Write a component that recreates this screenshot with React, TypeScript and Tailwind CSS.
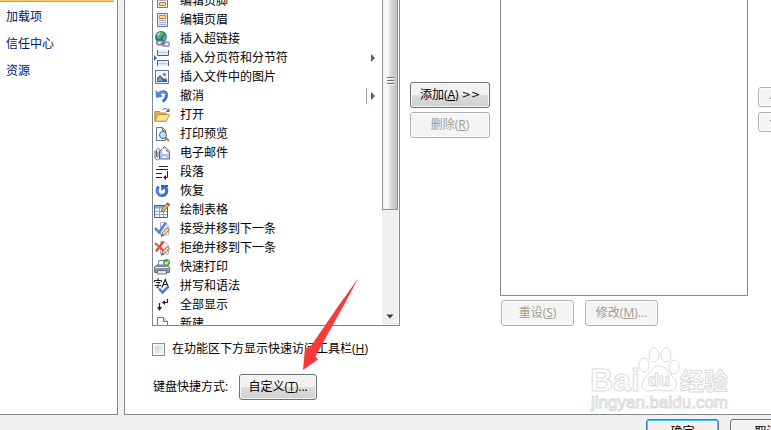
import type { ReactNode } from "react";

const sidebarItems = ["加载项", "信任中心", "资源"];

function Icon({ children }: { children: ReactNode }) {
  return (
    <svg width="16" height="16" viewBox="0 0 16 16" fill="none" className="shrink-0" aria-hidden="true">
      {children}
    </svg>
  );
}

const icons = {
  footer: (
    <Icon>
      <path d="M3.5 1.5h10v13h-10z" fill="#e3ecfb" stroke="#6478a4" />
      <path d="M5 3.500h7M5 5.500h7M5 7.500h7" stroke="#9fb0d4" />
      <path d="M5.500 9.500h6v3h-6z" fill="#ffdf8e" stroke="#e07b1f" />
    </Icon>
  ),
  header: (
    <Icon>
      <path d="M3.5 1.5h10v13h-10z" fill="#e3ecfb" stroke="#6478a4" />
      <path d="M5 8.500h7M5 10.500h7M5 12.500h7" stroke="#9fb0d4" />
      <path d="M5.500 3.500h6v3h-6z" fill="#ffdf8e" stroke="#e07b1f" />
    </Icon>
  ),
  link: (
    <Icon>
      <circle cx="7" cy="6" r="6" fill="#2b6fc2" />
      <path d="M2 4l3-3 4 .5 1 2-3 1.500L6 8 3 7zM9 6l3-2 1 2-2 4-2-1z" fill="#5fb64e" />
      <path d="M3.500 4L6 2" stroke="#d3f2cc" strokeWidth="1.200" />
      <rect x="2.800" y="9.800" width="7" height="4" rx="2" fill="#e8edf4" stroke="#5e6f88" strokeWidth="1.300" />
      <rect x="8.500" y="11.200" width="6.800" height="4" rx="2" fill="#e8edf4" stroke="#76869d" strokeWidth="1.300" />
      <path d="M6.500 12l5 1" stroke="#44546c" />
    </Icon>
  ),
  pageBreak: (
    <Icon>
      <path d="M0 5v6l3-3z" fill="#2f67c0" />
      <path d="M4 0h11v5H4zM4 11h11v5H4z" fill="#e6eefb" />
      <path d="M3.500 0v5.500h11V0M3.500 16v-5.500h11V16" stroke="#4d6088" />
      <path d="M5 2.500h8M5 13.500h8" stroke="#b9c7e2" />
    </Icon>
  ),
  picture: (
    <Icon>
      <path d="M1.500 1.500h13v13h-13z" fill="#f4f9ff" stroke="#5d76a8" />
      <path d="M3 13V9l3-3 4 4 1.500-1 1.500 2v2z" fill="#2f60a6" />
      <path d="M3 12l3-4.500L9 12z" fill="#7ca2d8" />
      <circle cx="10.500" cy="5.500" r="1.800" fill="#e8743a" />
    </Icon>
  ),
  undo: (
    <Icon>
      <path d="M4.500 6.500c3-4 8-3.500 8 .8 0 2.400-1.500 4.500-3.800 6.200" stroke="#3d72ca" strokeWidth="3" />
      <path d="M1.500 2l.5 8 7-1.500z" fill="#4b82da" />
      <path d="M5.500 5.500c2.500-2.500 6-1.500 6.200 1.500" stroke="#8fb4ef" />
    </Icon>
  ),
  open: (
    <Icon>
      <path d="M.8 14V4.500h4.700l1 1.500H12v8z" fill="#eab544" stroke="#b07b22" strokeWidth=".8" />
      <path d="M1 14.200l3.200-6.700h11.300l-3.200 6.700z" fill="#ffe193" stroke="#bd8429" strokeWidth=".8" />
      <path d="M8.500 3c1.500-2 4-2 5.500 0" stroke="#5a6f91" />
      <path d="M15.500 1v4h-4z" fill="#5a6f91" />
    </Icon>
  ),
  preview: (
    <Icon>
      <path d="M2.500 1.500h6l3 3v10h-9z" fill="#f4f8ff" stroke="#60789f" />
      <path d="M8.500 1.500v3h3" stroke="#60789f" />
      <path d="M11.500 11.500l3.500 3.500" stroke="#c38230" strokeWidth="2" />
      <circle cx="9" cy="9" r="3.500" fill="#c2e0f8" stroke="#4b678f" />
      <path d="M7 8.500l2-1.500" stroke="#ffffff" />
    </Icon>
  ),
  mail: (
    <Icon>
      <path d="M5.500 6.500L10.500 1.500l5 4.500v8h-10z" fill="#bdd2f5" stroke="#5b78ae" />
      <path d="M8 3.500h6v6H8z" fill="#ffffff" stroke="#9fb4d6" strokeWidth=".7" />
      <path d="M6 13.500l4.500-4 4.500 4z" fill="#eaf2ff" stroke="#7b97c6" strokeWidth=".8" />
      <path d="M12 4.500h2v2h-2z" fill="#d4524b" />
      <path
        d="M1 5.500v6.700c0 3.600 4.700 3.600 4.700 0V5.500c0-2.400-3.200-2.400-3.200 0v6.200c0 1.200 1.500 1.200 1.500 0V6.500"
        stroke="#5a6678"
      />
    </Icon>
  ),
  paragraph: (
    <Icon>
      <path d="M5 2.500h9M2 5.500h12M2 9.500h6M2 13.500h6M13.500 7v6.500H11" stroke="#222222" />
      <path d="M12 11v5l-3-2.500z" fill="#222222" />
    </Icon>
  ),
  redo: (
    <Icon>
      <path d="M4.500 3.500C1.500 8 4 12.500 8 12.500s6.300-4.500 3.500-8" stroke="#3a70d0" strokeWidth="3" />
      <path d="M7 2h7v2l-3 1-3.500 3z" fill="#2f64c4" />
      <path d="M3.800 6.500c-.6 3 1.200 5 3.700 5.200" stroke="#86adee" />
    </Icon>
  ),
  table: (
    <Icon>
      <path d="M.5 3.500h13v12H.5z" fill="#f4f8ff" stroke="#476298" />
      <path d="M1 4h12v2.500H1z" fill="#8aabdd" />
      <path d="M1 9.500h12M1 12.500h12M5.500 6v9M9.500 6v9" stroke="#8ba5d0" />
      <path d="M7.200 10l.8-2.800L13 1.200l2.300 1.800-5.300 6z" fill="#f4bd5a" stroke="#79532b" strokeWidth=".8" />
      <path d="M12.800 1l2.700 2.200" stroke="#c2483b" strokeWidth="2" />
    </Icon>
  ),
  accept: (
    <Icon>
      <path d="M6.500 1.500h4l4 4V14h-8z" fill="#edf3ff" stroke="#a3b5d6" />
      <path d="M1 7l4 4.500 7-10" stroke="#4b86dc" strokeWidth="2.600" />
      <path d="M7.500 15l1-3.500 4.500-5 2.500 2.200-5 5z" fill="#f5cf86" stroke="#795a37" strokeWidth=".8" />
      <path d="M7 15.500l2.500-.8-1.500-1.500z" fill="#2e3b52" />
    </Icon>
  ),
  reject: (
    <Icon>
      <path d="M6.500 1.500h4l4 4V14h-8z" fill="#edf3ff" stroke="#a3b5d6" />
      <path d="M1 3l9 8M9.500 1.500L2 11.500" stroke="#ea4d2e" strokeWidth="2.300" />
      <path d="M7.500 15l1-3.500 4.500-5 2.500 2.200-5 5z" fill="#f5cf86" stroke="#795a37" strokeWidth=".8" />
      <path d="M7 15.500l2.500-.8-1.500-1.500z" fill="#2e3b52" />
    </Icon>
  ),
  print: (
    <Icon>
      <path d="M4 7l.8-5.500H11V7" fill="#f9fbff" stroke="#7b8898" />
      <path d="M.5 8L3 6h10l2.500 2v5.500H.5z" fill="#8e99a8" stroke="#4f5a68" strokeWidth=".8" />
      <path d="M1 8.500h14" stroke="#dfe4ea" />
      <path d="M3.500 11.500h9v3.500h-9z" fill="#dbe8fb" stroke="#4d5c70" strokeWidth=".8" />
      <circle cx="12.500" cy="3.500" r="3.500" fill="#4fa548" />
      <path d="M10.700 3.500l1.500 1.500 2.300-3" stroke="#ffffff" strokeWidth="1.200" />
    </Icon>
  ),
  spelling: (
    <Icon>
      <path d="M4 0v2M.5 4V2.500h7V4M2 4.500h4L4 6.500V10l-1.500-.5M.5 7.500h7" stroke="#222222" />
      <path d="M8 9.500l3.200-8 3.300 8M9.300 6.500h4" stroke="#222222" strokeWidth="1.200" />
      <path d="M5 10.500l3.500 4 6-6" stroke="#4381dc" strokeWidth="2.500" />
    </Icon>
  ),
  showAll: (
    <Icon>
      <path d="M13.500 2v3.500H10M5.500 6v6" stroke="#222222" strokeWidth="1.200" />
      <path d="M11 3v5L8 5.500zM3 10h5l-2.500 4z" fill="#222222" />
    </Icon>
  ),
  blank: (
    <Icon>
      <path d="M3.500 1.500h6l4 4v10h-10z" fill="#f7faff" stroke="#647b9f" />
      <path d="M9.500 1.500v4h4" fill="#d5e2f5" stroke="#647b9f" />
    </Icon>
  ),
};

type Command = { label: string; icon: keyof typeof icons; menu?: boolean; split?: boolean };

const commands: Command[] = [
  { label: "编辑页脚", icon: "footer" },
  { label: "编辑页眉", icon: "header" },
  { label: "插入超链接", icon: "link" },
  { label: "插入分页符和分节符", icon: "pageBreak", menu: true },
  { label: "插入文件中的图片", icon: "picture" },
  { label: "撤消", icon: "undo", menu: true, split: true },
  { label: "打开", icon: "open" },
  { label: "打印预览", icon: "preview" },
  { label: "电子邮件", icon: "mail" },
  { label: "段落", icon: "paragraph" },
  { label: "恢复", icon: "redo" },
  { label: "绘制表格", icon: "table" },
  { label: "接受并移到下一条", icon: "accept" },
  { label: "拒绝并移到下一条", icon: "reject" },
  { label: "快速打印", icon: "print" },
  { label: "拼写和语法", icon: "spelling" },
  { label: "全部显示", icon: "showAll" },
  { label: "新建", icon: "blank" },
];

const buttonBase = "flex shrink-0 items-center justify-center whitespace-pre rounded-[3px] border";
const enabled =
  "border-[#707070] bg-linear-to-b from-[#f2f2f2] from-50% via-[#dddddd] via-50% to-[#cfcfcf] shadow-[inset_0_0_0_1px_#f6f6f6]";
const disabled = "border-[#adb2b5] bg-[#f4f4f4] text-[#a09d8e] shadow-[inset_0_0_0_1px_#fcfcfc]";

function CommandList() {
  return (
    <div className="flex h-[326px] overflow-hidden border-x border-b border-[#828790] bg-white">
      <ul className="-mt-[9px] flex-1">
        {commands.map((command) => (
          <li key={command.label} className="flex h-[19px] items-center pl-px">
            {icons[command.icon]}
            <span className="ml-[10px] flex-1">{command.label}</span>
            {command.menu && (
              <span className={`flex h-4 w-4 items-center border-l pl-1 ${command.split ? "border-[#9a9a9a]" : "border-transparent"}`}>
                <svg width="4" height="8" viewBox="0 0 4 8" aria-hidden="true">
                  <path d="M0 0v8l4-4z" fill="#4a5a9a" />
                </svg>
              </span>
            )}
          </li>
        ))}
      </ul>
      <div className="mr-px flex w-4 flex-col justify-between bg-[#efefef]">
        <div className="flex h-[210px] justify-center border-x border-b border-[#8f8f8f] bg-linear-to-r from-[#f5f5f5] from-40% via-[#dcdcde] via-50% to-[#c0c0c4] pt-[77px]">
          <svg width="7" height="8" viewBox="0 0 7 8" aria-hidden="true">
            <path d="M0 .5h7M0 3.500h7M0 6.500h7" stroke="#6d6d6d" />
            <path d="M0 1.500h7M0 4.500h7M0 7.500h7" stroke="#ffffff" />
          </svg>
        </div>
        <svg width="16" height="17" viewBox="0 0 16 17" aria-hidden="true">
          <path d="M4.500 6.500h7L8 10.500z" fill="#3c3c3c" />
        </svg>
      </div>
    </div>
  );
}

function Watermark() {
  return (
    <svg
      className="pointer-events-none absolute top-[344px] left-[588px]"
      width="144"
      height="70"
      viewBox="0 0 144 70"
      fill="#ffffff"
      stroke="#dadada"
      aria-hidden="true"
    >
      <g fontFamily="'Liberation Sans','Noto Sans CJK SC',sans-serif" fontWeight="700">
        <text x="2" y="47" fontSize="32">Bai</text>
        <path d="M71 22c-7 0-8 6-13 11-7 6-5 14 3 14 4 0 6-1 10-1s6 1 10 1c8 0 10-8 4-14-5-5-7-11-14-11z" />
        <ellipse cx="56" cy="21" rx="5" ry="7" />
        <ellipse cx="66" cy="11" rx="5" ry="7" />
        <ellipse cx="78" cy="11" rx="5" ry="7" />
        <ellipse cx="86" cy="23" rx="5" ry="7" />
        <text x="60" y="42" fontSize="18">du</text>
        <text x="92" y="46" fontSize="24">经验</text>
      </g>
      <text x="3" y="64" fontSize="17" fontFamily="'Liberation Sans',sans-serif">jingyan.baidu.com</text>
    </svg>
  );
}

export default function App() {
  return (
    <div className="relative flex h-screen flex-col overflow-hidden bg-[#f0f0f0] font-['Open_Sans','Noto_Sans_CJK_SC',sans-serif] text-[12px] leading-4 text-black">
      <div className="flex min-h-0 flex-1 gap-1.5">
        <nav className="w-[118px] shrink-0 border-r border-b border-[#828790] bg-white text-[#00156e]">
          <div className="mr-[3px] h-0.5 border-b border-[#e8a026] bg-[#ffc763]" />
          <ul className="flex flex-col gap-[11px] pt-[7px] pl-1.5">
            {sidebarItems.map((item) => (
              <li key={item}>
                <a href="#" className="block">{item}</a>
              </li>
            ))}
          </ul>
        </nav>

        <main className="min-w-0 flex-1 border-b border-l border-[#828790] bg-white pl-[27px]">
          <div className="flex gap-[10px]">
            <section className="flex-1">
              <CommandList />
              <label className="mt-[15px] flex items-center gap-[7px] whitespace-nowrap">
                <input
                  type="checkbox"
                  className="size-[13px] appearance-none border border-[#8e8f8f] bg-linear-to-br from-[#cbcfd5] to-[#f6f6f6] shadow-[inset_0_0_0_2px_#f4f4f4]"
                />
                <span>
                  在功能区下方显示快速访问工具栏(<u>H</u>)
                </span>
              </label>
              <div className="mt-[17px] flex items-center gap-[11px] pl-px">
                <span>键盘快捷方式:</span>
                <button type="button" className={`${buttonBase} ${enabled} h-[26px] w-[78px]`}>
                  自定义(<u>T</u>)...
                </button>
              </div>
            </section>

            <div className="flex w-20 shrink-0 flex-col gap-1 pt-[82px]">
              <button type="button" className={`${buttonBase} ${enabled} h-[26px]`}>
                添加(<u>A</u>) <span className="font-['DejaVu_Sans',sans-serif] text-[11px]">&gt;&gt;</span>
              </button>
              <button type="button" disabled className={`${buttonBase} ${disabled} h-[26px]`}>
                删除(<u>R</u>)
              </button>
            </div>

            <section className="flex-1">
              <div className="h-[296px] border-x border-b border-[#828790]" />
              <div className="mt-1 flex gap-[11px] pl-px">
                <button type="button" disabled className={`${buttonBase} ${disabled} h-[26px] w-[73px]`}>
                  重设(<u>S</u>)
                </button>
                <button type="button" disabled className={`${buttonBase} ${disabled} h-[26px] w-[73px]`}>
                  修改(<u>M</u>)...
                </button>
              </div>
            </section>

            <div className="flex w-[13px] shrink-0 flex-col gap-[5px] overflow-hidden pt-[87px]">
              <button type="button" disabled aria-label="上移" className={`${buttonBase} ${disabled} h-5 w-[30px]`}>
                <svg width="8" height="4" viewBox="0 0 8 4" aria-hidden="true">
                  <path d="M0 4l4-4 4 4z" fill="#a09d8e" />
                </svg>
              </button>
              <button type="button" disabled aria-label="下移" className={`${buttonBase} ${disabled} h-5 w-[30px]`}>
                <svg width="8" height="4" viewBox="0 0 8 4" aria-hidden="true">
                  <path d="M0 0l4 4 4-4z" fill="#a09d8e" />
                </svg>
              </button>
            </div>
          </div>
        </main>
      </div>

      <footer className="flex h-[15px] shrink-0 justify-end gap-[11px] overflow-hidden pt-1">
        <button
          type="button"
          className="flex h-[26px] w-[73px] shrink-0 items-center justify-center rounded-[3px] border border-[#3c7fb1] bg-[#f0f0f0] shadow-[inset_0_0_0_1px_#3fc8f0]"
        >
          确定
        </button>
        <div className="w-[41px] shrink-0 overflow-hidden">
          <button type="button" className={`${buttonBase} ${enabled} h-[26px] w-[73px]`}>
            取消
          </button>
        </div>
      </footer>

      <Watermark />
      <svg
        className="pointer-events-none absolute top-[278px] left-[302px]"
        width="58"
        height="94"
        viewBox="0 0 58 94"
        aria-hidden="true"
      >
        <path d="M56.500 0L37 27 8 69.500 3 70 1 92l15-10.500-2.500-3L28 52 42 27z" fill="#f93a3a" />
      </svg>
    </div>
  );
}
